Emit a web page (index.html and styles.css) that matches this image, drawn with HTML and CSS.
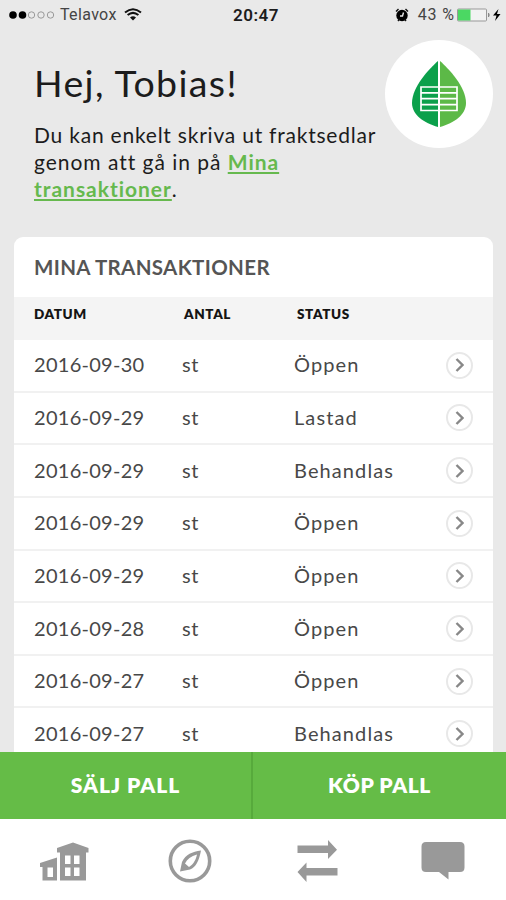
FILE: index.html
```html
<!DOCTYPE html>
<html lang="sv">
<head>
<meta charset="utf-8">
<title>Mina transaktioner</title>
<link rel="stylesheet" href="styles.css">
</head>
<body>
<div class="app">
  <header class="statusbar">
    <div class="carrier">
      <svg width="48" height="10" viewBox="0 0 48 10"><circle cx="6" cy="5" r="3.800"/><circle cx="15.5" cy="5" r="3.800"/><g fill="none" stroke="#999" stroke-width="1"><circle cx="24.5" cy="5" r="3.2"/><circle cx="34" cy="5" r="3.2"/><circle cx="43.500" cy="5" r="3.2"/></g></svg>
      <span class="carrier-name">Telavox</span>
      <svg class="wifi" width="18" height="13" viewBox="0 0 18 13" fill="none" stroke="#111" stroke-width="2"><path d="M1 4.5Q9-2 17 4.5M3.6 7.1Q9 2.6 14.4 7.1"/><path d="M6 9.4Q9 7 12 9.4L9 12.5Z" fill="#111" stroke="none"/></svg>
    </div>
    <span class="clock">20:47</span>
    <div class="power">
      <svg width="14" height="14" viewBox="0 0 14 14"><circle cx="7" cy="7.5" r="5.7"/><path d="M1 3.5 3.5 1M13 3.5 10.5 1M3 13l1.5-2M11 13l-1.500-2" stroke="#111" stroke-width="1.4"/><path d="M8.5 4.5 7.5 8H5" fill="none" stroke="#e9e9e9" stroke-width="1.4"/></svg>
      <span class="percent">43 %</span>
      <svg width="46" height="14" viewBox="0 0 46 14"><rect x="1.5" y="1" width="29" height="12" rx="1" fill="#f2f2f2" stroke="#999"/><rect x="2" y="1.5" width="12.5" height="11" fill="#4bd863"/><path d="M32 5h1q1.500 2 0 4h-1z" fill="#888"/><path d="M42.500 1 37 7.500h3.500L39 13l5.500-7H41z"/></svg>
    </div>
  </header>

  <section class="intro">
    <div class="greeting">
      <h1>Hej, Tobias!</h1>
      <p><span class="first">Du kan enkelt skriva ut fraktsedlar</span><br>genom att gå in på <a>Mina</a><br><a>transaktioner</a>.</p>
    </div>
    <div class="logo">
      <svg width="54" height="68" viewBox="0 0 54 68"><path d="M26 1C17 9 0 27 0 43c0 12 12 20 26 24z" fill="#0ba04b"/><path d="M28 1c9 8 26 26 26 42 0 12-12 20-26 24z" fill="#5cb947"/><path d="M9 27h36v23.500H9zM9 32.800h36M9 38.700h36M9 44.600h36" fill="none" stroke="#fff" stroke-width="1.700"/></svg>
    </div>
  </section>

  <main class="card">
    <h2>MINA TRANSAKTIONER</h2>
    <div class="row head"><span>DATUM</span><span>ANTAL</span><span>STATUS</span></div>
    <div class="row"><span class="date">2016-09-30</span><span>st</span><span class="status">Öppen</span><i class="go"><svg width="9" height="14" viewBox="0 0 9 14"><path d="m1.500 1 6 6-6 6"/></svg></i></div>
    <div class="row"><span class="date">2016-09-29</span><span>st</span><span class="status">Lastad</span><i class="go"><svg width="9" height="14" viewBox="0 0 9 14"><path d="m1.500 1 6 6-6 6"/></svg></i></div>
    <div class="row"><span class="date">2016-09-29</span><span>st</span><span class="status">Behandlas</span><i class="go"><svg width="9" height="14" viewBox="0 0 9 14"><path d="m1.500 1 6 6-6 6"/></svg></i></div>
    <div class="row"><span class="date">2016-09-29</span><span>st</span><span class="status">Öppen</span><i class="go"><svg width="9" height="14" viewBox="0 0 9 14"><path d="m1.500 1 6 6-6 6"/></svg></i></div>
    <div class="row"><span class="date">2016-09-29</span><span>st</span><span class="status">Öppen</span><i class="go"><svg width="9" height="14" viewBox="0 0 9 14"><path d="m1.500 1 6 6-6 6"/></svg></i></div>
    <div class="row"><span class="date">2016-09-28</span><span>st</span><span class="status">Öppen</span><i class="go"><svg width="9" height="14" viewBox="0 0 9 14"><path d="m1.500 1 6 6-6 6"/></svg></i></div>
    <div class="row"><span class="date">2016-09-27</span><span>st</span><span class="status">Öppen</span><i class="go"><svg width="9" height="14" viewBox="0 0 9 14"><path d="m1.500 1 6 6-6 6"/></svg></i></div>
    <div class="row"><span class="date">2016-09-27</span><span>st</span><span class="status">Behandlas</span><i class="go"><svg width="9" height="14" viewBox="0 0 9 14"><path d="m1.500 1 6 6-6 6"/></svg></i></div>
  </main>

  <div class="actions"><button class="sell">SÄLJ PALL</button><button>KÖP PALL</button></div>

  <nav class="tabs">
    <a><svg width="50" height="40" viewBox="0 0 50 40"><path fill-rule="evenodd" d="M1 22 18 16.500v23H3.500V26H1zM8.500 26.500V36H14V26.500z"/><path fill-rule="evenodd" d="M18 7 34 1.500 49.500 7v4.500H47v28H21v-28h-3zM26 14.500V23h5.500V14.500zM35 14.500V23h5.500V14.500zM26 26.500V35h5.500V26.500zM35 26.500V35h5.500V26.500z"/></svg></a>
    <a><svg width="44" height="44" viewBox="0 0 44 44"><circle cx="22" cy="22" r="19.700" fill="none" stroke="#999" stroke-width="3.600"/><path fill-rule="evenodd" d="M33 11.500C31 22 28 28 22 30.500L12 32.500 14 23C18 15 24 13 33 11.500zM29 15.500C23 17 19 20 17 24.500L21 28C26 25 28 20 29 15.500z"/></svg></a>
    <a><svg width="42" height="44" viewBox="0 0 42 44"><path d="M1.500 6.500H32V1l9 9.800-9 9.200v-6H1.500zM41.500 36.500h-31v6.500L1.500 33l9-9.500V29h31z"/></svg></a>
    <a><svg width="44" height="40" viewBox="0 0 44 40"><path d="M5 1h34q4.500 0 4.500 4.500v21q0 4.500-4.500 4.500H27.500v7.500L18 31H5Q.5 31 .5 26.500v-21Q.5 1 5 1z"/></svg></a>
  </nav>
</div>
</body>
</html>
```
FILE: styles.css
```css
* { box-sizing: border-box; }
body { margin: 0; font-family: Lato, "Open Sans", sans-serif; }
.app { width: 506px; height: 900px; display: flex; flex-direction: column; overflow: hidden; background: #e9e9e9; color: #1c1c1c; }
svg { display: block; flex: none; }
.statusbar { height: 29px; flex: none; display: grid; grid-template-columns: 1fr auto 1fr; align-items: center; padding: 0 5px 0 7px; font-family: Roboto, sans-serif; }
.carrier { display: flex; align-items: center; }
.carrier-name { margin-left: 5px; font-size: 16px; letter-spacing: .35px; color: #444; }
.wifi { margin-left: 7px; }
.clock { padding-left: 4px; font-size: 17px; font-weight: 600; letter-spacing: .5px; }
.power { display: flex; align-items: center; justify-content: flex-end; }
.power > svg:last-child { margin-right: -1px; }
.percent { font-size: 16px; letter-spacing: .9px; margin: 0 1px 0 9px; color: #444; }
.intro { height: 208px; flex: none; display: flex; justify-content: space-between; padding: 0 13px 0 34px; }
.greeting { width: 350px; }
h1 { margin: 31px 0 0; font-size: 37.5px; line-height: 45px; font-weight: 400; letter-spacing: 1.35px; }
.intro p { margin: 16px 0 0; font-size: 21px; line-height: 27px; letter-spacing: .97px; white-space: nowrap; }
.first { letter-spacing: .78px; }
.intro a { color: #66b94e; font-weight: 700; text-decoration: underline; text-decoration-thickness: 2px; text-underline-offset: 2px; }
.logo { width: 108px; height: 108px; margin-top: 11px; border-radius: 50%; background: #fff; display: flex; align-items: center; justify-content: center; }
.card { flex: 1; min-height: 0; margin: 0 13px 0 14px; overflow: hidden; border-radius: 9px 9px 0 0; background: #fff; }
h2 { margin: 0; height: 60px; padding-left: 20px; font-size: 20.5px; line-height: 60px; font-weight: 700; letter-spacing: .35px; color: #555; }
.row { height: 52.65px; display: grid; grid-template-columns: 148px 112px 152px 27px; align-items: center; padding: 0 0 2px 20px; border-bottom: 2px solid #f1f1f1; font-size: 20px; letter-spacing: .5px; color: #484848; }
.row.head { height: 43px; grid-template-columns: 150px 113px auto; padding: 0 0 10px 20px; background: #f4f4f4; border: 0; font-size: 13.500px; font-weight: 800; letter-spacing: .6px; color: #151515; }
.date { letter-spacing: .28px; }
.status { letter-spacing: 1.1px; }
.go { width: 27px; height: 27px; border: 2px solid #e8e8e8; border-radius: 50%; display: flex; align-items: center; justify-content: center; position: relative; top: 1px; }
.go path { fill: none; stroke: #888; stroke-width: 2.4; }
.actions { height: 67px; flex: none; display: grid; grid-template-columns: 1fr 1fr; background: #65bc47; }
button { border: 0; padding: 0 0 2px; background: none; color: #fff; font: 800 21px Lato, sans-serif; letter-spacing: .6px; }
.sell { border-right: 2px solid #57aa3c; letter-spacing: 1px; }
.tabs { height: 81px; flex: none; display: grid; grid-template-columns: repeat(4, 1fr); align-items: center; justify-items: center; padding: 3px 0 0 1px; background: #fff; }
.tabs svg { fill: #999; }
```
